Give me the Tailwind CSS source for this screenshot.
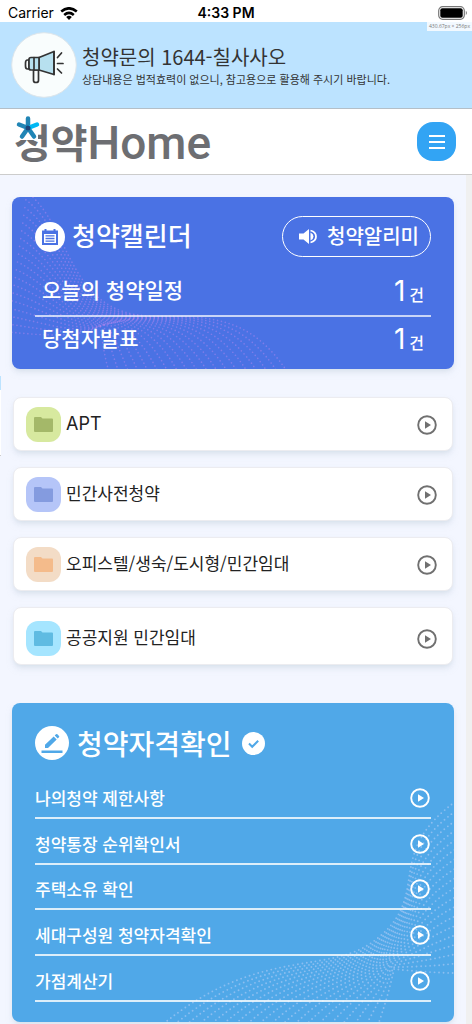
<!DOCTYPE html>
<html lang="ko">
<head>
<meta charset="utf-8">
<meta name="viewport" content="width=device-width, initial-scale=1">
<title>청약Home</title>
<script src="https://cdn.jsdelivr.net/npm/@tailwindcss/browser@4"></script>
</head>
<body class="bg-[#f0f0f0] font-['Noto_Sans_CJK_KR',sans-serif] text-[#333]">
<svg class="hidden">
  <symbol id="folder" viewBox="0 0 19 15"><path fill="currentColor" d="M1 0H7L8.500 1.500H18Q19 1.500 19 2.500V14Q19 15 18 15H1Q0 15 0 14V1Q0 0 1 0Z"/></symbol>
  <symbol id="play" viewBox="0 0 20 20"><circle cx="10" cy="10" r="8.800" fill="none" stroke="currentColor" stroke-width="1.900"/><path fill="currentColor" d="M8 6.200V13.800L14 10Z"/></symbol>
</svg>

<div class="relative flex h-[22px] items-center justify-between bg-white px-2 font-['Inter',sans-serif] text-black">
  <div class="flex flex-1 items-center gap-1.5 pt-1 text-[14px] leading-4">
    <span>Carrier</span>
    <svg class="h-[13px] w-[18px]" viewBox="0 0 18 13" fill="none" stroke="#000" stroke-width="2.600"><path d="M1.200 4.600Q9-2 16.800 4.600"/><path d="M4.200 7.900Q9 3.900 13.800 7.900"/><path fill="#000" stroke="none" d="M9 13L6.200 10Q9 7.700 11.800 10Z"/></svg>
  </div>
  <div class="pt-1 text-center text-[14px] leading-4 font-semibold whitespace-nowrap">4:33 PM</div>
  <div class="-mr-1 flex flex-1 justify-end pt-1 pl-6">
    <svg class="h-[14px] w-[30px]" viewBox="0 0 30 14"><rect x=".7" y=".7" width="25.600" height="12.600" rx="4" fill="none" stroke="#777" stroke-width="1.200"/><rect x="2.300" y="2.300" width="22.400" height="9.400" rx="2" fill="#000"/><path d="M27.800 4.800Q30 7 27.800 9.200Z" fill="#777"/></svg>
  </div>
  <div class="absolute top-[22px] right-0 z-10 h-[9px] bg-white/80 px-0.5 font-['Open_Sans',sans-serif] text-[5px] leading-[9px] whitespace-nowrap text-[#777]">430.67px × 256px</div>
</div>

<section class="flex h-[87px] items-center gap-[5px] border-b border-[#b4bfc8] bg-[#bce3ff] pl-[11px]">
  <svg class="size-[66px] shrink-0" viewBox="0 0 66 66">
    <circle cx="33" cy="33" r="32.300" fill="#f9fdfd" stroke="#dde5ea"/>
    <g transform="translate(-1 1)" fill="#b7e0ef" stroke="#333" stroke-width="1.700" stroke-linejoin="round" stroke-linecap="round">
      <path fill="#f9fdfd" d="M19 27H17.500Q15.500 27 15.500 30V33Q15.500 36 17.500 36H19Z"/>
      <path fill="#f9fdfd" d="M23.500 37V47.500Q23.500 49.500 26 49.500Q28.500 49.500 28.500 47.500V37Z"/>
      <path d="M29 24.500L44 18.500V41.500L29 37Z"/>
      <path d="M21 24.500H29V37H21Q19 37 19 35V26.500Q19 24.500 21 24.500Z"/>
      <path fill="none" d="M24 24.500V37M44 18.500V41.500M47.500 24.500L51.500 20M47.500 30.500H53M47.500 36L51.500 40"/>
    </g>
  </svg>
  <div>
    <h2 class="text-[20px] leading-7">청약문의 1644-칠사사오</h2>
    <p class="text-[11px] leading-4">상담내용은 법적효력이 없으니, 참고용으로 활용해 주시기 바랍니다.</p>
  </div>
</section>

<header class="flex h-[66px] items-center justify-between border-b border-[#ccc] bg-white pr-4 pl-[14px]">
  <a href="#" class="relative flex items-center pb-0.5 text-[#6d6e72]">
    <span class="text-[40px] leading-[48px] font-bold">청약</span>
    <span class="pt-1 font-['Roboto',sans-serif] text-[46px] leading-[48px] font-medium">Home</span>
    <svg class="absolute top-0 left-0 h-[27px] w-7" viewBox="0 0 28 27" stroke-linecap="round" fill="none">
      <path fill="#fff" d="M0 0H24V25H0Z"/>
      <g stroke="#2185b5" stroke-width="4.500"><path d="M14 13V3.500M14 13L5 9.500M14 13L8 21.500M14 13L20 21.500"/></g>
      <path stroke="#00b8f4" stroke-width="4.500" d="M14 13L23 9.500"/>
      <circle cx="14" cy="13" r="2.500" fill="#1b4379"/>
    </svg>
  </a>
  <button type="button" aria-label="메뉴" class="flex size-[39px] items-center justify-center rounded-2xl bg-[#32a4f4]">
    <svg class="size-4" viewBox="0 0 16 16" stroke="#fff" stroke-width="2"><path d="M0 2H16M0 8H16M0 14H16"/></svg>
  </button>
</header>

<main class="relative mr-1.5 bg-[#f3f6ff] px-3 pt-[22px] pb-0.5">
  <div class="absolute top-[201px] left-0 h-20 w-px border-t-[14px] border-b border-t-[#bce3ff] border-b-[#ccc] bg-white"></div>

  <section class="relative overflow-hidden rounded-lg bg-[#4a72e4] px-[23px] pt-[19px] text-white shadow-md shadow-slate-300/50">
    <svg id="wave1" class="absolute top-0 left-0 h-[172px] w-[442px]" viewBox="0 0 442 172" fill="none" stroke="#b085f0" stroke-opacity=".5" stroke-width="1.700" stroke-linecap="round" stroke-dasharray="0 4"></svg>
    <div class="relative flex items-center justify-between">
      <h2 class="flex items-center gap-[7px] text-[26px] leading-8 font-medium whitespace-nowrap">
        <svg class="size-[30px]" viewBox="0 0 30 30"><circle cx="15" cy="15" r="15" fill="#fff"/><path fill="#4a72e4" d="M7 8.500H9.500V7H11.500V8.500H18.500V7H20.500V8.500H23V23H7ZM9 12V21H21V12Z" fill-rule="evenodd"/><path stroke="#4a72e4" stroke-width="1.300" d="M10.500 13.800H19.500M10.500 16.500H19.500M10.500 19.200H19.500"/></svg>
        <span class="pb-1">청약캘린더</span>
      </h2>
      <button type="button" class="flex h-[41px] items-center gap-2 rounded-full border border-white pr-[11px] pb-0.5 pl-[15px] text-[20px] leading-6 font-medium whitespace-nowrap">
        <svg class="h-5 w-[21px]" viewBox="0 0 21 20"><path fill="#fff" d="M1 7.500H5.500L11 3V18L5.500 13.500H1ZM12.500 6.500Q15.500 8 15.500 10.500T12.500 14.500Z"/><path fill="none" stroke="#fff" stroke-width="1.800" d="M12.500 4.500Q18 6 18 10.500T12.500 16.500"/></svg>
        청약알리미
      </button>
    </div>
    <div class="relative flex h-[60px] items-center justify-between border-b-2 border-white/70 px-[7px] pt-2 text-[21px] font-medium">
      <span>오늘의 청약일정</span>
      <span class="flex items-baseline gap-1 pt-1 leading-8"><span class="font-['Inter',sans-serif] text-[28px] font-normal">1</span><span class="text-[16px]">건</span></span>
    </div>
    <div class="relative mb-2 flex h-11 items-center justify-between px-[7px] pb-0.5 text-[21px] font-medium">
      <span>당첨자발표</span>
      <span class="flex items-baseline gap-1 pt-1 leading-8"><span class="font-['Inter',sans-serif] text-[28px] font-normal">1</span><span class="text-[16px]">건</span></span>
    </div>
  </section>

  <nav class="mx-px mt-7 flex flex-col gap-4 text-[17px] leading-6 text-[#222]">
    <a href="#" class="flex h-[54px] items-center gap-[5px] rounded-lg border border-[#ececf0] bg-white pr-[15px] pl-3 shadow-md shadow-slate-300/50">
      <span class="flex size-[35px] items-center justify-center rounded-xl bg-[#d7e99f] text-[#a4b869]"><svg class="h-[15px] w-[19px]"><use href="#folder"/></svg></span>
      <span class="flex-1 font-['Inter',sans-serif] text-[18px]">APT</span><svg class="mt-0.5 size-5 text-[#707070]"><use href="#play"/></svg>
    </a>
    <a href="#" class="flex h-[54px] items-center gap-[5px] rounded-lg border border-[#ececf0] bg-white pr-[15px] pl-3 shadow-md shadow-slate-300/50">
      <span class="flex size-[35px] items-center justify-center rounded-xl bg-[#b5c5f8] text-[#849bdf]"><svg class="h-[15px] w-[19px]"><use href="#folder"/></svg></span>
      <span class="flex-1 pb-0.5">민간사전청약</span><svg class="mt-0.5 size-5 text-[#707070]"><use href="#play"/></svg>
    </a>
    <a href="#" class="flex h-[54px] items-center gap-[5px] rounded-lg border border-[#ececf0] bg-white pr-[15px] pl-3 shadow-md shadow-slate-300/50">
      <span class="flex size-[35px] items-center justify-center rounded-xl bg-[#f3dcc6] text-[#f4bb8b]"><svg class="h-[15px] w-[19px]"><use href="#folder"/></svg></span>
      <span class="flex-1 pb-0.5">오피스텔/생숙/도시형/민간임대</span><svg class="mt-0.5 size-5 text-[#707070]"><use href="#play"/></svg>
    </a>
    <a href="#" class="flex h-[58px] items-center gap-[5px] rounded-lg border border-[#ececf0] bg-white pt-1 pr-[15px] pl-3 shadow-md shadow-slate-300/50">
      <span class="flex size-[35px] items-center justify-center rounded-xl bg-[#a5e5ff] text-[#5fbbe2]"><svg class="h-[15px] w-[19px]"><use href="#folder"/></svg></span>
      <span class="flex-1 pb-0.5">공공지원 민간임대</span><svg class="mt-0.5 size-5 text-[#707070]"><use href="#play"/></svg>
    </a>
  </nav>

  <section class="relative mt-[38px] overflow-hidden rounded-lg bg-[#50a8e8] px-[23px] pt-[22px] pb-5 text-white shadow-md shadow-slate-300/50">
    <svg id="wave2" class="absolute right-0 bottom-0 h-[319px] w-[442px]" viewBox="0 0 442 319" fill="none" stroke="#c4d4fa" stroke-opacity=".5" stroke-width="1.900" stroke-linecap="round" stroke-dasharray="0 4.500"></svg>
    <h2 class="relative flex h-9 items-center gap-2 text-[28px] leading-9 font-medium whitespace-nowrap">
      <svg class="size-[34px]" viewBox="0 0 34 34"><circle cx="17" cy="17" r="17" fill="#fff"/><path fill="#50a8e8" d="M10 22V18.800L18.700 10.500L21.700 13.500L13 22ZM19.700 9.500L21 8.300Q21.700 7.700 22.400 8.300L24 10Q24.600 10.600 24 11.300L22.700 12.500ZM6.500 24.500H27.500V27H6.500Z"/></svg>
      <span class="pr-0.5">청약자격확인</span>
      <svg class="size-[23px]" viewBox="0 0 23 23"><circle cx="11.500" cy="11.500" r="11.500" fill="#fff"/><path fill="none" stroke="#50a8e8" stroke-width="2" d="M7 11.500L10.200 14.800L16.200 8.800"/></svg>
    </h2>
    <ul class="relative mt-3 text-[17px] leading-6 font-medium">
      <li><a href="#" class="flex h-[46px] items-end justify-between border-b-2 border-white/80 pr-px pb-[7px]">나의청약 제한사항<svg class="my-0.5 size-5"><use href="#play"/></svg></a></li>
      <li><a href="#" class="flex h-[46px] items-end justify-between border-b-2 border-white/80 pr-px pb-[7px]">청약통장 순위확인서<svg class="my-0.5 size-5"><use href="#play"/></svg></a></li>
      <li><a href="#" class="flex h-[45px] items-end justify-between border-b-2 border-white/80 pr-px pb-[7px]">주택소유 확인<svg class="my-0.5 size-5"><use href="#play"/></svg></a></li>
      <li><a href="#" class="flex h-[46px] items-end justify-between border-b-2 border-white/80 pr-px pb-[7px]">세대구성원 청약자격확인<svg class="my-0.5 size-5"><use href="#play"/></svg></a></li>
      <li><a href="#" class="flex h-[46px] items-end justify-between border-b-2 border-white/80 pr-px pb-[7px]">가점계산기<svg class="my-0.5 size-5"><use href="#play"/></svg></a></li>
    </ul>
  </section>
</main>

<script>
// Dotted wave: a family of curves blended between two boundary curves.
function wave(id, a, b, count) {
  const svg = document.getElementById(id);
  for (let i = 0; i <= count; i++) {
    const p = a.map((v, k) => (v + (b[k] - v) * i / count).toFixed(1));
    const path = document.createElementNS('http://www.w3.org/2000/svg', 'path');
    path.setAttribute('d', `M${p[0]} ${p[1]}C${p.slice(2, 8).join(' ')}C${p.slice(8).join(' ')}`);
    svg.appendChild(path);
  }
}
wave('wave1', [15,-5, 60,30, 55,118, 140,119, 200,119, 240,120, 276,176], [-4,135, 30,138, 70,142, 88,128, 90,140, 92,160, 98,178], 18);
wave('wave2', [447,96, 370,150, 420,190, 367,234, 320,275, 250,240, 150,322], [445,270, 425,270, 400,268, 382,266, 378,285, 372,305, 366,322], 18);
</script>
</body>
</html>
